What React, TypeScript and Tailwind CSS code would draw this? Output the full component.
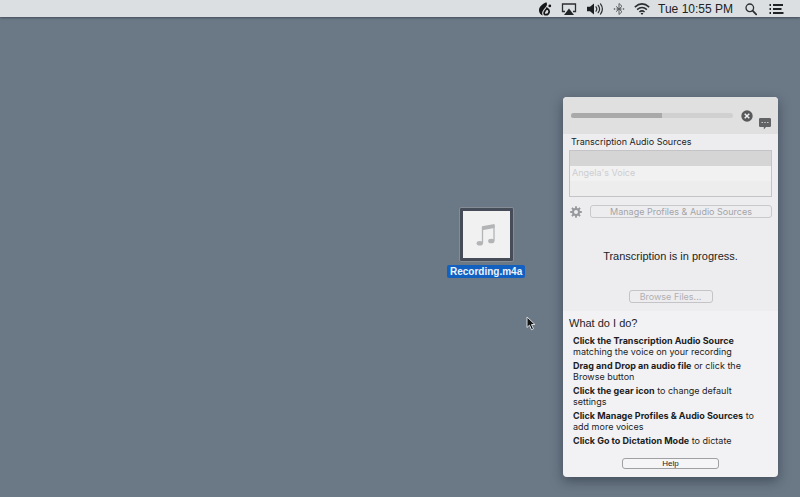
import type { ReactNode } from 'react';

const PROGRESS = 56;

const SOURCES = [
  { id: 'default', name: '', selected: true },
  { id: 'angela', name: "Angela's Voice", selected: false },
];

const TIPS = [
  { lead: 'Click the Transcription Audio Source', rest: 'matching the voice on your recording' },
  { lead: 'Drag and Drop an audio file', rest: 'or click the Browse button' },
  { lead: 'Click the gear icon', rest: 'to change default settings' },
  { lead: 'Click Manage Profiles & Audio Sources', rest: 'to add more voices' },
  { lead: 'Click Go to Dictation Mode', rest: 'to dictate' },
];

function MenuButton({ label, children }: { label: string; children: ReactNode }) {
  return (
    <button type="button" aria-label={label} className="flex h-4 items-center">
      {children}
    </button>
  );
}

function FlameIcon() {
  return (
    <svg width="14" height="14" viewBox="0 0 14 14" fill="#151719">
      <path d="M8.300.3C4 2.200 1 4.800 1 8.300c0 2.500 1.400 4.500 3.800 5.200C3.600 11.300 4 9.300 5.700 7.400 7.400 5.500 9 4.300 9 2.300 9 1.500 8.800.8 8.300.3Z" />
      <path
        d="M8.900 6.300C8 8 6.100 9.200 6.100 11c0 1 .7 1.700 1.800 1.700 1.900 0 3.300-1.400 3.300-3.200 0-1.300-.9-2.300-2.300-3.200Z"
        fill="none"
        stroke="#151719"
        strokeWidth="1.700"
      />
      <circle cx="11.800" cy="3.900" r="1.400" />
    </svg>
  );
}

function AirplayIcon() {
  return (
    <svg width="16" height="14" viewBox="0 0 16 14">
      <path d="M4 9.500H1.500V2h13v7.500H12" fill="none" stroke="#2b2e31" strokeWidth="1.300" />
      <path d="M8 6.500 13 13H3Z" fill="#202326" />
    </svg>
  );
}

function VolumeIcon() {
  return (
    <svg width="18" height="14" viewBox="0 0 18 14">
      <path d="M1 4.700h3L8 1.500v11L4 9.300H1Z" fill="#1d2023" />
      <path
        d="M10 4.800q1.600 2.200 0 4.400M12.200 3.300q2.800 3.700 0 7.400M14.500 1.900q3.800 5.100 0 10.200"
        fill="none"
        stroke="#2b2e31"
        strokeWidth="1.200"
        strokeLinecap="round"
      />
    </svg>
  );
}

function BluetoothIcon() {
  return (
    <svg width="12" height="14" viewBox="0 0 12 14" fill="none" stroke="#5a5e62" strokeWidth="1">
      <path d="m3 4.300 6 5.400-3 2.800v-11l3 2.800-6 5.400" />
      <path d="M.8 7h1.400M3.600 7H5M7 7h1.400M9.800 7h1.400" strokeWidth="1.500" />
    </svg>
  );
}

function WifiIcon() {
  return (
    <svg width="16" height="14" viewBox="0 0 16 14">
      <g fill="none" stroke="#2b2e31" strokeWidth="1.500">
        <path d="M.8 5.100q7.200-6.400 14.400 0" />
        <path d="M3.100 7.600q4.900-4.200 9.800 0" />
        <path d="M5.400 10q2.600-2.200 5.200 0" />
      </g>
      <path d="M6.600 11.300q1.400-1.100 2.800 0L8 12.900Z" fill="#202326" />
    </svg>
  );
}

function SearchIcon() {
  return (
    <svg width="12" height="14" viewBox="0 0 12 14" fill="none" stroke="#2b2e31">
      <circle cx="4.800" cy="5.800" r="3.800" strokeWidth="1.300" />
      <path d="m7.600 8.700 3.600 3.700" strokeWidth="1.700" strokeLinecap="round" />
    </svg>
  );
}

function ListIcon() {
  return (
    <svg width="15" height="14" viewBox="0 0 15 14" fill="none" stroke="#202326" strokeWidth="1.800">
      <path d="M.5 3H2M.5 7H2M.5 11H2M4 3h10M4 7h8.500M4 11h10.500" />
    </svg>
  );
}

function MenuBar() {
  return (
    <header className="flex h-[17px] items-center justify-end bg-[#dcdfe2] pr-4 shadow-[0_1px_2px_rgba(40,50,62,0.6)]">
      <div className="flex items-center gap-[9px]">
        <MenuButton label="Dictation">
          <FlameIcon />
        </MenuButton>
        <MenuButton label="AirPlay">
          <AirplayIcon />
        </MenuButton>
        <MenuButton label="Volume">
          <VolumeIcon />
        </MenuButton>
        <MenuButton label="Bluetooth">
          <BluetoothIcon />
        </MenuButton>
        <MenuButton label="Wi-Fi">
          <WifiIcon />
        </MenuButton>
      </div>
      <time className="mr-3 ml-2 text-[12px] leading-4 text-[#202225]">Tue 10:55 PM</time>
      <div className="flex items-center gap-3">
        <MenuButton label="Search">
          <SearchIcon />
        </MenuButton>
        <MenuButton label="Notification Center">
          <ListIcon />
        </MenuButton>
      </div>
    </header>
  );
}

function DesktopFile() {
  return (
    <button type="button" className="absolute top-[207px] left-[447px] flex flex-col items-center gap-[3px]">
      <span className="rounded-[2px] border border-[#868c95] bg-[#474c59] p-[3px]">
        <span className="flex size-[47px] items-center justify-center bg-[#f1f1f2]">
          <svg width="20" height="24" viewBox="0 0 20 24">
            <path d="M6 3.200 18.500 1v4L6 7.200Z" fill="#b3b4b6" />
            <path d="M6.500 4v16M18 2v15.500" stroke="#b3b4b6" strokeWidth="1.300" />
            <ellipse cx="3.800" cy="20.300" rx="3.200" ry="2.300" fill="#b3b4b6" />
            <ellipse cx="15.300" cy="18" rx="3.200" ry="2.300" fill="#b3b4b6" />
          </svg>
        </span>
      </span>
      <span className="rounded-[2px] bg-[#1260c0] px-[3px] text-[10px] leading-[13px] font-bold text-[#e9f4ff]">
        Recording.m4a
      </span>
    </button>
  );
}

function Cursor() {
  return (
    <svg className="absolute top-[316px] left-[526px]" width="10" height="15" viewBox="0 0 10 15" aria-hidden="true">
      <path
        d="M1 1v10.500l2.500-2.300 2 4.600 2-.9-2-4.400H9Z"
        fill="#111315"
        stroke="#d9dde1"
        strokeWidth="1"
        strokeLinejoin="round"
      />
    </svg>
  );
}

function GearIcon() {
  return (
    <svg width="12" height="12" viewBox="-6 -6 12 12">
      <circle r="3" fill="none" stroke="#96989b" strokeWidth="2" />
      <path
        d="M0-3.500V-5.800M0 3.500V5.800M-3.500 0H-5.800M3.500 0H5.800M-2.500-2.500-4.100-4.100M2.500 2.500 4.100 4.100M-2.500 2.500-4.100 4.100M2.500-2.500 4.100-4.100"
        stroke="#96989b"
        strokeWidth="1.800"
      />
    </svg>
  );
}

function PanelHeader() {
  return (
    <div className="flex h-[37px] items-center bg-[#e1e0e1] pr-[7px] pl-2">
      <div
        role="progressbar"
        aria-label="Transcription progress"
        aria-valuenow={PROGRESS}
        className="h-[5px] flex-1 overflow-hidden rounded-full bg-[#d0d0d0]"
      >
        <div className="h-full bg-[#a9a9a9]" style={{ width: `${PROGRESS}%` }} />
      </div>
      <button type="button" aria-label="Cancel" className="ml-2">
        <svg width="12" height="12" viewBox="0 0 12 12">
          <circle cx="6" cy="6" r="5.700" fill="#58595b" />
          <path d="m3.700 3.700 4.600 4.600M8.300 3.700 3.700 8.300" stroke="#f0f0f0" strokeWidth="1.500" />
        </svg>
      </button>
      <button type="button" aria-label="Messages" className="ml-[6px] self-end pb-1">
        <svg width="12" height="12" viewBox="0 0 12 12">
          <path d="M1.200 0h9.600A1.200 1.200 0 0 1 12 1.200v6.600A1.200 1.200 0 0 1 10.800 9H7l-2.200 2.400V9H1.200A1.200 1.200 0 0 1 0 7.800V1.200A1.200 1.200 0 0 1 1.200 0Z" fill="#626365" />
          <path d="M2.500 4.500h1.400M5.300 4.500h1.400M8.100 4.500h1.400" stroke="#d0d0d0" strokeWidth="1.200" />
        </svg>
      </button>
    </div>
  );
}

function TranscriptionPanel() {
  return (
    <main className="absolute top-[97px] right-[22px] w-[215px] overflow-hidden rounded-[4px] bg-[#f2f2f4] text-[#1c1d1f] shadow-[0_4px_12px_rgba(25,35,48,0.5)]">
      <PanelHeader />

      <section className="bg-[#ededf0] px-[6px] pb-2">
        <h2 id="sources" className="pl-[2px] font-['Inter',sans-serif] text-[9px] leading-4">
          Transcription Audio Sources
        </h2>
        <ul role="listbox" aria-labelledby="sources" className="h-[47px] border border-[#c4c4c6] bg-[#ededee]">
          {SOURCES.map((source) => (
            <li
              key={source.id}
              role="option"
              aria-selected={source.selected}
              aria-label={source.name || 'Default'}
              className="h-[15px] px-[2px] font-['Inter',sans-serif] text-[9px] leading-[13px] text-[#cdcdcf] odd:bg-[#d5d5d6] even:bg-[#f1f1f2]"
            >
              {source.name}
            </li>
          ))}
        </ul>
        <div className="mt-2 flex items-center gap-2">
          <button type="button" aria-label="Settings" className="ml-px">
            <GearIcon />
          </button>
          <button
            type="button"
            disabled
            className="h-[13px] flex-1 rounded-[3px] border border-[#c9c9cc] font-['Inter',sans-serif] text-[9px] leading-[11px] text-[#a4a4a7]"
          >
            Manage Profiles &amp; Audio Sources
          </button>
        </div>
        <p className="mt-[30px] text-center text-[11px] leading-4">Transcription is in progress.</p>
        <div className="mt-[26px] flex justify-center">
          <button
            type="button"
            disabled
            className="h-[13px] w-[84px] rounded-[3px] border border-[#c4c4c7] font-['Inter',sans-serif] text-[9px] leading-[11px] text-[#b0b0b3]"
          >
            Browse Files...
          </button>
        </div>
      </section>

      <section className="px-[6px] pt-1 pb-2">
        <h2 className="text-[11px] leading-4">What do I do?</h2>
        <ul className="mt-1 flex flex-col gap-[3px] pr-2 pl-1 font-['Inter',sans-serif] text-[9px] leading-[11px]">
          {TIPS.map((tip) => (
            <li key={tip.lead}>
              <b>{tip.lead}</b> {tip.rest}
            </li>
          ))}
        </ul>
        <div className="mt-3 flex justify-center">
          <button
            type="button"
            className="h-[11px] w-[97px] rounded-[3px] border border-[#9fa0a3] bg-[#f5f5f7] text-[8px] leading-[9px]"
          >
            Help
          </button>
        </div>
      </section>
    </main>
  );
}

export default function App() {
  return (
    <div className="relative min-h-screen bg-[#6b7886] font-['Liberation_Sans',Arial,sans-serif]">
      <MenuBar />
      <DesktopFile />
      <Cursor />
      <TranscriptionPanel />
    </div>
  );
}
